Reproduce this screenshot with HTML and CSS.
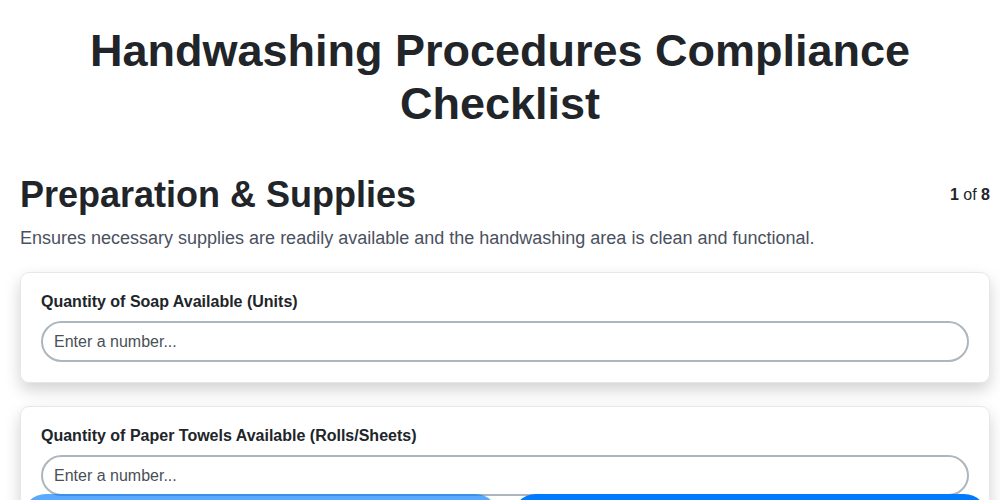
FILE: index.html
```html
<!DOCTYPE html>
<html lang="en">
<head>
    <meta charset="UTF-8">
    <meta name="viewport" content="width=device-width, initial-scale=1.0">
    <title>Handwashing Procedures Compliance Checklist</title>
    <link rel="stylesheet" href="styles.css">
</head>
<body>

    <div class="container">
        <h1 class="page-title">Handwashing Procedures Compliance Checklist</h1>

        <div class="section-head">
            <h2 class="section-title">Preparation &amp; Supplies</h2>
            <div class="step-count"><b>1</b> of <b>8</b></div>
        </div>
        <p class="section-desc">Ensures necessary supplies are readily available and the handwashing area is clean and functional.</p>

        <div class="card">
            <label for="soap">Quantity of Soap Available (Units)</label>
            <input type="number" id="soap" placeholder="Enter a number...">
        </div>

        <div class="card">
            <label for="towels">Quantity of Paper Towels Available (Rolls/Sheets)</label>
            <input type="number" id="towels" placeholder="Enter a number...">
        </div>
    </div>

    <div class="navigation">
        <button class="btn btn-prev" disabled>Previous</button>
        <button class="btn btn-next">Next</button>
    </div>

</body>
</html>
```

FILE: styles.css
```css
body {
    font-family: "Liberation Sans", Arial, sans-serif;
    margin: 0;
    padding: 0;
    color: #212529;
    background: #fff;
}
.container {
    padding: 24px 10px 80px 20px;
}
.page-title {
    font-size: 45px;
    line-height: 53px;
    text-align: center;
    margin: 0 0 43px;
    padding: 0 60px 0 50px;
}
.section-head {
    display: flex;
    justify-content: space-between;
    align-items: center;
}
.section-title {
    font-size: 36px;
    line-height: 44px;
    margin: 0;
}
.step-count {
    font-size: 16px;
}
.section-desc {
    font-size: 18px;
    line-height: 22px;
    color: #4a5160;
    margin: 10px 0 23px;
}
.card {
    border: 1px solid #e6e7eb;
    border-radius: 9px;
    box-shadow: 0 7px 16px rgba(0, 0, 0, 0.18);
    padding: 19px 20px 20px;
    margin-bottom: 23px;
}
.card label {
    display: block;
    font-size: 16px;
    font-weight: bold;
    line-height: 20px;
    margin-bottom: 9px;
}
.card input {
    display: block;
    width: 100%;
    box-sizing: border-box;
    height: 41px;
    padding: 0 11px;
    border: 2px solid #adb5bd;
    border-radius: 21px;
    font-family: inherit;
    font-size: 16px;
    color: #212529;
    outline: none;
}
.card input::placeholder {
    color: #495057;
}
.navigation {
    position: fixed;
    left: 0;
    right: 0;
    bottom: -42px;
    display: flex;
    gap: 13px;
    padding: 0 12px 0 22px;
}
.btn {
    flex: 1;
    height: 48px;
    border: none;
    border-radius: 24px;
    background-color: #007bff;
    color: white;
    font-size: 16px;
    cursor: pointer;
}
.btn:disabled {
    opacity: 0.65;
    cursor: default;
}
```
